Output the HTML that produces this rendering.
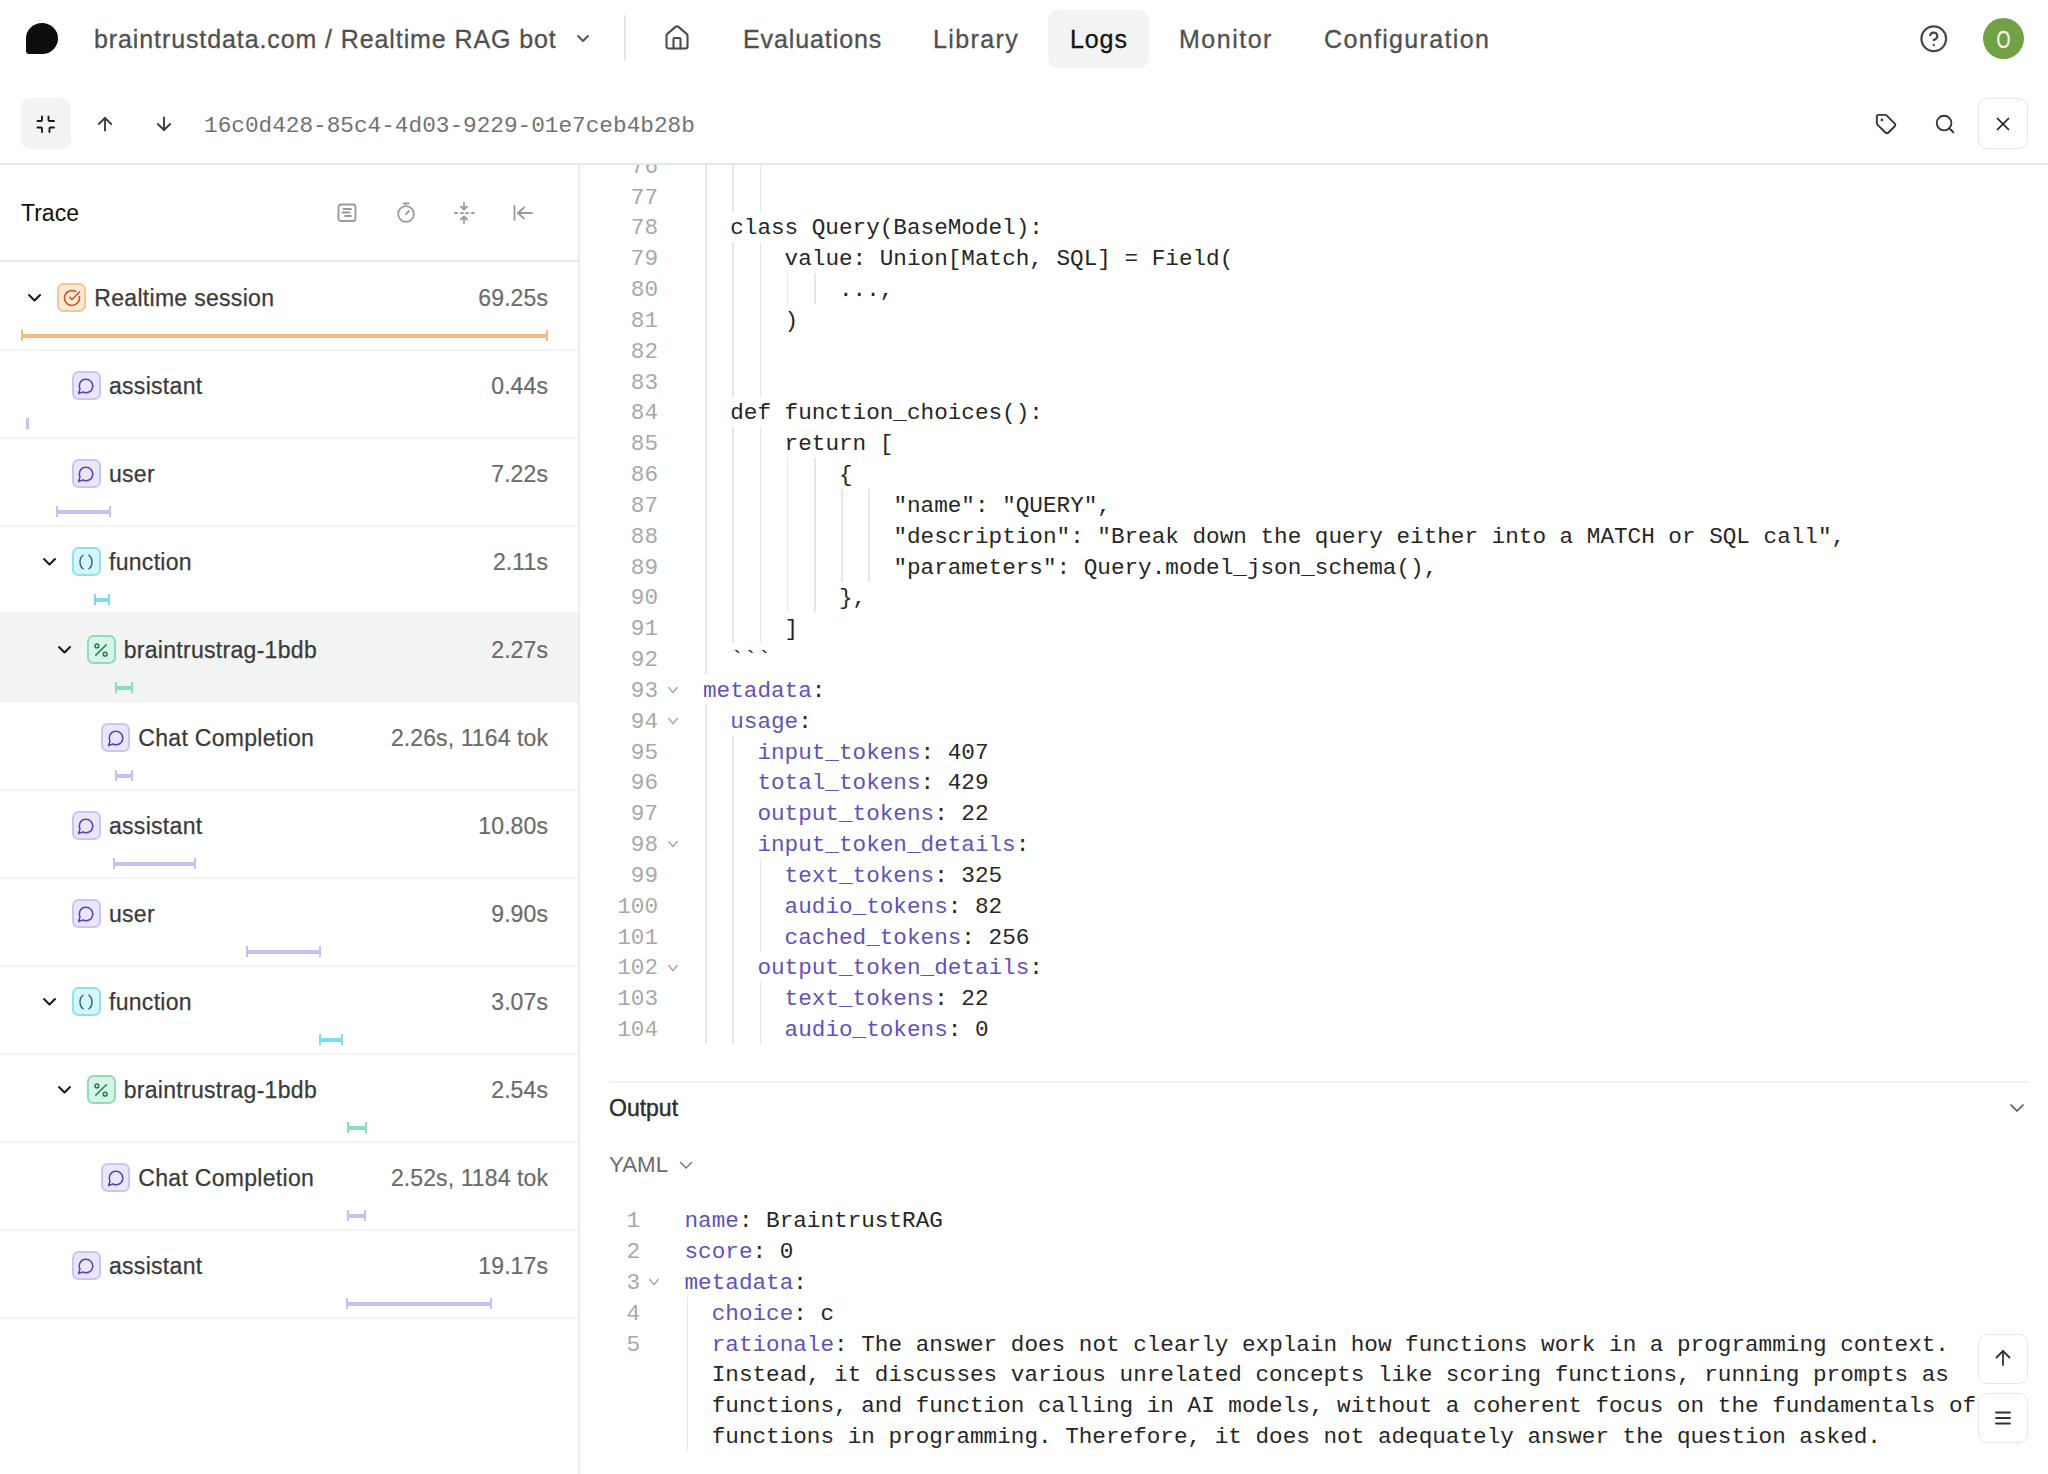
<!DOCTYPE html>
<html><head><meta charset="utf-8"><title>Realtime RAG bot</title>
<style>
html,body{margin:0;padding:0;background:#fff;}
body{width:2048px;height:1474px;overflow:hidden;position:relative;font-family:"Liberation Sans",sans-serif;}
.k{color:#6151bc}
</style></head><body>

<div style="position:absolute;left:26px;top:23px;width:32px;height:31px;background:#0d0d0d;border-radius:16px 16px 16px 3px / 15.5px 15.5px 15.5px 3px"></div>
<div style="position:absolute;left:94px;top:24.98px;font-family:'Liberation Sans', sans-serif;font-size:25px;color:#505050;letter-spacing:0.9px;white-space:pre;line-height:normal;-webkit-text-stroke:0.3px #505050">braintrustdata.com / Realtime RAG bot</div>
<svg style="position:absolute;left:572px;top:28px" width="22" height="22" viewBox="0 0 22 22" fill="none" stroke="#555" stroke-width="2" stroke-linecap="round" stroke-linejoin="round" ><path d="M6 8l5 5 5-5"/></svg>
<div style="position:absolute;left:624px;top:15px;width:2px;height:46px;background:#e8e8e8"></div>
<svg style="position:absolute;left:663px;top:24px" width="28" height="28" viewBox="0 0 24 24" fill="none" stroke="#4d4d4d" stroke-width="1.8" stroke-linecap="round" stroke-linejoin="round" ><path d="M15 21v-8a1 1 0 0 0-1-1h-4a1 1 0 0 0-1 1v8"/><path d="M3 10a2 2 0 0 1 .709-1.528l7-5.999a2 2 0 0 1 2.582 0l7 5.999A2 2 0 0 1 21 10v9a2 2 0 0 1-2 2H5a2 2 0 0 1-2-2z"/></svg>
<div style="position:absolute;left:1048px;top:10px;width:101px;height:58px;background:#f2f3f3;border-radius:10px"></div>
<div style="position:absolute;left:743px;top:24.98px;font-family:'Liberation Sans', sans-serif;font-size:25px;color:#505050;letter-spacing:0.9px;white-space:pre;line-height:normal;-webkit-text-stroke:0.3px #505050">Evaluations</div>
<div style="position:absolute;left:933px;top:24.98px;font-family:'Liberation Sans', sans-serif;font-size:25px;color:#505050;letter-spacing:1.4px;white-space:pre;line-height:normal;-webkit-text-stroke:0.3px #505050">Library</div>
<div style="position:absolute;left:1070px;top:24.98px;font-family:'Liberation Sans', sans-serif;font-size:25px;color:#141414;letter-spacing:0.9px;white-space:pre;line-height:normal;-webkit-text-stroke:0.3px #141414">Logs</div>
<div style="position:absolute;left:1179px;top:24.98px;font-family:'Liberation Sans', sans-serif;font-size:25px;color:#505050;letter-spacing:1.5px;white-space:pre;line-height:normal;-webkit-text-stroke:0.3px #505050">Monitor</div>
<div style="position:absolute;left:1324px;top:24.98px;font-family:'Liberation Sans', sans-serif;font-size:25px;color:#505050;letter-spacing:1.35px;white-space:pre;line-height:normal;-webkit-text-stroke:0.3px #505050">Configuration</div>
<svg style="position:absolute;left:1918.85px;top:23.95px" width="29.5" height="29.5" viewBox="0 0 24 24" fill="none" stroke="#474747" stroke-width="1.85" stroke-linecap="round" stroke-linejoin="round" ><circle cx="12" cy="12" r="10"/><path d="M9.09 9a3 3 0 0 1 5.83 1c0 2-3 3-3 3"/><path d="M12 17h.01"/></svg>
<div style="position:absolute;left:1982.5px;top:18px;width:41px;height:41px;border-radius:50%;background:#72a145"></div>
<div style="position:absolute;left:1982.5px;top:19.5px;width:41px;height:41px;line-height:41px;text-align:center;font-family:'Liberation Sans',sans-serif;font-size:23px;color:#f6fbef;-webkit-text-stroke:0.3px #f6fbef;transform:scaleX(0.78)">O</div>
<div style="position:absolute;left:21px;top:98px;width:50px;height:51px;background:#f2f3f3;border-radius:9px"></div>
<svg style="position:absolute;left:36px;top:114.7px" width="20" height="19" viewBox="0 0 20 19" fill="none" stroke="#1a1a1a" stroke-width="1.9" stroke-linecap="round" stroke-linejoin="round" ><path d="M6 1.5v3.5a1 1 0 0 1-1 1H1.5"/><path d="M12.5 1.5v3.5a1 1 0 0 0 1 1H18"/><path d="M1.5 12.5H5a1 1 0 0 1 1 1V17"/><path d="M18 12.5h-3.5a1 1 0 0 0-1 1V17"/></svg>
<svg style="position:absolute;left:96px;top:115px" width="18" height="18" viewBox="0 0 18 18" fill="none" stroke="#3d3d3d" stroke-width="1.9" stroke-linecap="round" stroke-linejoin="round" ><path d="M2.8 9L9 3l6.2 6"/><path d="M9 3v12.5"/></svg>
<svg style="position:absolute;left:154.5px;top:115px" width="18" height="18" viewBox="0 0 18 18" fill="none" stroke="#3d3d3d" stroke-width="1.9" stroke-linecap="round" stroke-linejoin="round" ><path d="M2.8 9L9 15l6.2-6"/><path d="M9 2.5v12.5"/></svg>
<div style="position:absolute;left:204px;top:113.09px;font-family:'Liberation Mono', monospace;font-size:22.72px;color:#727272;letter-spacing:0px;white-space:pre;line-height:normal;">16c0d428-85c4-4d03-9229-01e7ceb4b28b</div>
<svg style="position:absolute;left:1875px;top:113px" width="22" height="22" viewBox="0 0 24 24" fill="none" stroke="#333" stroke-width="2" stroke-linecap="round" stroke-linejoin="round" ><path d="M12.586 2.586A2 2 0 0 0 11.172 2H4a2 2 0 0 0-2 2v7.172a2 2 0 0 0 .586 1.414l8.704 8.704a2.426 2.426 0 0 0 3.42 0l6.58-6.58a2.426 2.426 0 0 0 0-3.42z"/><circle cx="7.5" cy="7.5" r=".5" fill="#333"/></svg>
<svg style="position:absolute;left:1934px;top:113px" width="22" height="22" viewBox="0 0 24 24" fill="none" stroke="#333" stroke-width="2" stroke-linecap="round" stroke-linejoin="round" ><circle cx="11" cy="11" r="8"/><path d="m21 21-4.3-4.3"/></svg>
<div style="position:absolute;left:1978px;top:98px;width:48px;height:49px;border:1.5px solid #e4e4e4;border-radius:9px"></div>
<svg style="position:absolute;left:1992px;top:113px" width="22" height="22" viewBox="0 0 24 24" fill="none" stroke="#222" stroke-width="1.9" stroke-linecap="round" stroke-linejoin="round" ><path d="M18 6 6 18"/><path d="m6 6 12 12"/></svg>
<div style="position:absolute;left:0;top:163px;width:2048px;height:2px;background:#e6e6e6"></div>
<div style="position:absolute;left:578px;top:164px;width:2px;height:1310px;background:#ececec"></div>
<div style="position:absolute;left:21px;top:200.09px;font-family:'Liberation Sans', sans-serif;font-size:23px;color:#111;letter-spacing:0px;white-space:pre;line-height:normal;">Trace</div>
<svg style="position:absolute;left:336px;top:202px" width="22" height="22" viewBox="0 0 22 22" fill="none" stroke="#9a9a9a" stroke-width="1.8" stroke-linecap="round" stroke-linejoin="round" ><rect x="2.5" y="2.5" width="17" height="16.5" rx="2.5"/><path d="M7.5 7h7.5"/><path d="M6.5 10.5h7"/><path d="M9 14h6"/></svg>
<svg style="position:absolute;left:395px;top:200px" width="22" height="26" viewBox="0 0 22 26" fill="none" stroke="#9a9a9a" stroke-width="1.8" stroke-linecap="round" stroke-linejoin="round" ><path d="M8.5 3.5h5"/><circle cx="11" cy="14" r="7.8"/><path d="M11 14l3-3"/></svg>
<svg style="position:absolute;left:452px;top:201px" width="24" height="24" viewBox="0 0 24 24" fill="none" stroke="#9a9a9a" stroke-width="1.8" stroke-linecap="round" stroke-linejoin="round" ><path d="M12 2v6"/><path d="M9 5.5l3 3 3-3"/><path d="M12 22v-6"/><path d="M9 18.5l3-3 3 3"/><path d="M3 12h2"/><path d="M9 12h2"/><path d="M14 12h2"/><path d="M20 12h2"/></svg>
<svg style="position:absolute;left:510px;top:201px" width="24" height="24" viewBox="0 0 24 24" fill="none" stroke="#9a9a9a" stroke-width="1.8" stroke-linecap="round" stroke-linejoin="round" ><path d="M4.5 5v14"/><path d="M14 6.5l-6 5.5 6 5.5"/><path d="M8 12h14"/></svg>
<div style="position:absolute;left:0;top:260px;width:578px;height:2px;background:#e8e8e8"></div>
<svg style="position:absolute;left:26.299999999999997px;top:289px" width="17" height="17" viewBox="0 0 17 17" fill="none" stroke="#1a1a1a" stroke-width="2.1" stroke-linecap="round" stroke-linejoin="round" ><path d="M3 6l5.5 5.5L14 6"/></svg>
<div style="position:absolute;left:57.30px;top:283px;width:25px;height:25px;background:#fde9d4;border:2px solid #f3c699;border-radius:6.5px"></div>
<svg style="position:absolute;left:62.8px;top:288.5px" width="18" height="18" viewBox="0 0 24 24" fill="none" stroke="#c2541c" stroke-width="2" stroke-linecap="round" stroke-linejoin="round" ><path d="M21.801 10A10 10 0 1 1 17 3.335"/><path d="m9 11 3 3L22 4"/></svg>
<div style="position:absolute;left:94.3px;top:285.49px;font-family:'Liberation Sans', sans-serif;font-size:23px;color:#3a3a3a;letter-spacing:0.3px;white-space:pre;line-height:normal;-webkit-text-stroke:0.25px #3a3a3a">Realtime session</div>
<div style="position:absolute;right:1500px;top:285.49px;font-family:'Liberation Sans', sans-serif;font-size:23px;color:#6b6b6b;letter-spacing:0.1px;white-space:pre;line-height:normal;-webkit-text-stroke:0.2px #6b6b6b">69.25s</div>
<div style="position:absolute;left:21.0px;top:334.0px;width:527.0px;height:4px;background:#f4bb7e"></div>
<div style="position:absolute;left:21.0px;top:330.0px;width:2px;height:11px;background:#f4bb7e"></div>
<div style="position:absolute;left:546.0px;top:330.0px;width:2px;height:11px;background:#f4bb7e"></div>
<div style="position:absolute;left:0;top:349px;width:578px;height:2px;background:#f4f4f4"></div>
<div style="position:absolute;left:71.97px;top:371px;width:25px;height:25px;background:#ebe7fb;border:2px solid #cdc3f5;border-radius:6.5px"></div>
<svg style="position:absolute;left:77.47px;top:376.5px" width="18" height="18" viewBox="0 0 24 24" fill="none" stroke="#5b3fc4" stroke-width="2" stroke-linecap="round" stroke-linejoin="round" ><path d="M7.9 20A9 9 0 1 0 4 16.1L2 22Z"/></svg>
<div style="position:absolute;left:108.97px;top:373.49px;font-family:'Liberation Sans', sans-serif;font-size:23px;color:#3a3a3a;letter-spacing:0.3px;white-space:pre;line-height:normal;-webkit-text-stroke:0.25px #3a3a3a">assistant</div>
<div style="position:absolute;right:1500px;top:373.49px;font-family:'Liberation Sans', sans-serif;font-size:23px;color:#6b6b6b;letter-spacing:0.1px;white-space:pre;line-height:normal;-webkit-text-stroke:0.2px #6b6b6b">0.44s</div>
<div style="position:absolute;left:26.4px;top:418.0px;width:2px;height:11px;background:#c9bff6"></div>
<div style="position:absolute;left:27.0px;top:418.0px;width:2px;height:11px;background:#c9bff6"></div>
<div style="position:absolute;left:0;top:437px;width:578px;height:2px;background:#f4f4f4"></div>
<div style="position:absolute;left:71.97px;top:459px;width:25px;height:25px;background:#ebe7fb;border:2px solid #cdc3f5;border-radius:6.5px"></div>
<svg style="position:absolute;left:77.47px;top:464.5px" width="18" height="18" viewBox="0 0 24 24" fill="none" stroke="#5b3fc4" stroke-width="2" stroke-linecap="round" stroke-linejoin="round" ><path d="M7.9 20A9 9 0 1 0 4 16.1L2 22Z"/></svg>
<div style="position:absolute;left:108.97px;top:461.49px;font-family:'Liberation Sans', sans-serif;font-size:23px;color:#3a3a3a;letter-spacing:0.3px;white-space:pre;line-height:normal;-webkit-text-stroke:0.25px #3a3a3a">user</div>
<div style="position:absolute;right:1500px;top:461.49px;font-family:'Liberation Sans', sans-serif;font-size:23px;color:#6b6b6b;letter-spacing:0.1px;white-space:pre;line-height:normal;-webkit-text-stroke:0.2px #6b6b6b">7.22s</div>
<div style="position:absolute;left:55.6px;top:510.0px;width:55.3px;height:4px;background:#c9bff6"></div>
<div style="position:absolute;left:55.6px;top:506.0px;width:2px;height:11px;background:#c9bff6"></div>
<div style="position:absolute;left:108.9px;top:506.0px;width:2px;height:11px;background:#c9bff6"></div>
<div style="position:absolute;left:0;top:525px;width:578px;height:2px;background:#f4f4f4"></div>
<svg style="position:absolute;left:40.97px;top:553px" width="17" height="17" viewBox="0 0 17 17" fill="none" stroke="#1a1a1a" stroke-width="2.1" stroke-linecap="round" stroke-linejoin="round" ><path d="M3 6l5.5 5.5L14 6"/></svg>
<div style="position:absolute;left:71.97px;top:547px;width:25px;height:25px;background:#d7f6fb;border:2px solid #8fe1f0;border-radius:6.5px"></div>
<svg style="position:absolute;left:77.47px;top:552.5px" width="18" height="18" viewBox="0 0 24 24" fill="none" stroke="#2a6a80" stroke-width="2" stroke-linecap="round" stroke-linejoin="round" ><path d="M8 21s-4-3-4-9 4-9 4-9"/><path d="M16 3s4 3 4 9-4 9-4 9"/></svg>
<div style="position:absolute;left:108.97px;top:549.48px;font-family:'Liberation Sans', sans-serif;font-size:23px;color:#3a3a3a;letter-spacing:0.3px;white-space:pre;line-height:normal;-webkit-text-stroke:0.25px #3a3a3a">function</div>
<div style="position:absolute;right:1500px;top:549.48px;font-family:'Liberation Sans', sans-serif;font-size:23px;color:#6b6b6b;letter-spacing:0.1px;white-space:pre;line-height:normal;-webkit-text-stroke:0.2px #6b6b6b">2.11s</div>
<div style="position:absolute;left:93.6px;top:598.0px;width:16.4px;height:4px;background:#7fdaee"></div>
<div style="position:absolute;left:93.6px;top:594.0px;width:2px;height:11px;background:#7fdaee"></div>
<div style="position:absolute;left:108.0px;top:594.0px;width:2px;height:11px;background:#7fdaee"></div>
<div style="position:absolute;left:0;top:613px;width:578px;height:2px;background:#f4f4f4"></div>
<div style="position:absolute;left:0;top:612px;width:578px;height:89px;background:#f2f3f3"></div>
<svg style="position:absolute;left:55.64px;top:641px" width="17" height="17" viewBox="0 0 17 17" fill="none" stroke="#1a1a1a" stroke-width="2.1" stroke-linecap="round" stroke-linejoin="round" ><path d="M3 6l5.5 5.5L14 6"/></svg>
<div style="position:absolute;left:86.64px;top:635px;width:25px;height:25px;background:#d7f5e6;border:2px solid #8fdcb7;border-radius:6.5px"></div>
<svg style="position:absolute;left:92.14px;top:640.5px" width="18" height="18" viewBox="0 0 24 24" fill="none" stroke="#267a55" stroke-width="2" stroke-linecap="round" stroke-linejoin="round" ><line x1="19" x2="5" y1="5" y2="19"/><circle cx="6.5" cy="6.5" r="2.5"/><circle cx="17.5" cy="17.5" r="2.5"/></svg>
<div style="position:absolute;left:123.64px;top:637.48px;font-family:'Liberation Sans', sans-serif;font-size:23px;color:#3a3a3a;letter-spacing:0.3px;white-space:pre;line-height:normal;-webkit-text-stroke:0.25px #3a3a3a">braintrustrag-1bdb</div>
<div style="position:absolute;right:1500px;top:637.48px;font-family:'Liberation Sans', sans-serif;font-size:23px;color:#6b6b6b;letter-spacing:0.1px;white-space:pre;line-height:normal;-webkit-text-stroke:0.2px #6b6b6b">2.27s</div>
<div style="position:absolute;left:114.7px;top:686.0px;width:17.8px;height:4px;background:#88e0b7"></div>
<div style="position:absolute;left:114.7px;top:682.0px;width:2px;height:11px;background:#88e0b7"></div>
<div style="position:absolute;left:130.5px;top:682.0px;width:2px;height:11px;background:#88e0b7"></div>
<div style="position:absolute;left:0;top:701px;width:578px;height:2px;background:#f4f4f4"></div>
<div style="position:absolute;left:101.31px;top:723px;width:25px;height:25px;background:#ebe7fb;border:2px solid #cdc3f5;border-radius:6.5px"></div>
<svg style="position:absolute;left:106.81px;top:728.5px" width="18" height="18" viewBox="0 0 24 24" fill="none" stroke="#5b3fc4" stroke-width="2" stroke-linecap="round" stroke-linejoin="round" ><path d="M7.9 20A9 9 0 1 0 4 16.1L2 22Z"/></svg>
<div style="position:absolute;left:138.31px;top:725.48px;font-family:'Liberation Sans', sans-serif;font-size:23px;color:#3a3a3a;letter-spacing:0.3px;white-space:pre;line-height:normal;-webkit-text-stroke:0.25px #3a3a3a">Chat Completion</div>
<div style="position:absolute;right:1500px;top:725.48px;font-family:'Liberation Sans', sans-serif;font-size:23px;color:#6b6b6b;letter-spacing:0.1px;white-space:pre;line-height:normal;-webkit-text-stroke:0.2px #6b6b6b">2.26s, 1164 tok</div>
<div style="position:absolute;left:114.7px;top:774.0px;width:17.8px;height:4px;background:#c9bff6"></div>
<div style="position:absolute;left:114.7px;top:770.0px;width:2px;height:11px;background:#c9bff6"></div>
<div style="position:absolute;left:130.5px;top:770.0px;width:2px;height:11px;background:#c9bff6"></div>
<div style="position:absolute;left:0;top:789px;width:578px;height:2px;background:#f4f4f4"></div>
<div style="position:absolute;left:71.97px;top:811px;width:25px;height:25px;background:#ebe7fb;border:2px solid #cdc3f5;border-radius:6.5px"></div>
<svg style="position:absolute;left:77.47px;top:816.5px" width="18" height="18" viewBox="0 0 24 24" fill="none" stroke="#5b3fc4" stroke-width="2" stroke-linecap="round" stroke-linejoin="round" ><path d="M7.9 20A9 9 0 1 0 4 16.1L2 22Z"/></svg>
<div style="position:absolute;left:108.97px;top:813.48px;font-family:'Liberation Sans', sans-serif;font-size:23px;color:#3a3a3a;letter-spacing:0.3px;white-space:pre;line-height:normal;-webkit-text-stroke:0.25px #3a3a3a">assistant</div>
<div style="position:absolute;right:1500px;top:813.48px;font-family:'Liberation Sans', sans-serif;font-size:23px;color:#6b6b6b;letter-spacing:0.1px;white-space:pre;line-height:normal;-webkit-text-stroke:0.2px #6b6b6b">10.80s</div>
<div style="position:absolute;left:113.4px;top:862.0px;width:82.4px;height:4px;background:#c9bff6"></div>
<div style="position:absolute;left:113.4px;top:858.0px;width:2px;height:11px;background:#c9bff6"></div>
<div style="position:absolute;left:193.8px;top:858.0px;width:2px;height:11px;background:#c9bff6"></div>
<div style="position:absolute;left:0;top:877px;width:578px;height:2px;background:#f4f4f4"></div>
<div style="position:absolute;left:71.97px;top:899px;width:25px;height:25px;background:#ebe7fb;border:2px solid #cdc3f5;border-radius:6.5px"></div>
<svg style="position:absolute;left:77.47px;top:904.5px" width="18" height="18" viewBox="0 0 24 24" fill="none" stroke="#5b3fc4" stroke-width="2" stroke-linecap="round" stroke-linejoin="round" ><path d="M7.9 20A9 9 0 1 0 4 16.1L2 22Z"/></svg>
<div style="position:absolute;left:108.97px;top:901.48px;font-family:'Liberation Sans', sans-serif;font-size:23px;color:#3a3a3a;letter-spacing:0.3px;white-space:pre;line-height:normal;-webkit-text-stroke:0.25px #3a3a3a">user</div>
<div style="position:absolute;right:1500px;top:901.48px;font-family:'Liberation Sans', sans-serif;font-size:23px;color:#6b6b6b;letter-spacing:0.1px;white-space:pre;line-height:normal;-webkit-text-stroke:0.2px #6b6b6b">9.90s</div>
<div style="position:absolute;left:245.6px;top:950.0px;width:75.5px;height:4px;background:#c9bff6"></div>
<div style="position:absolute;left:245.6px;top:946.0px;width:2px;height:11px;background:#c9bff6"></div>
<div style="position:absolute;left:319.1px;top:946.0px;width:2px;height:11px;background:#c9bff6"></div>
<div style="position:absolute;left:0;top:965px;width:578px;height:2px;background:#f4f4f4"></div>
<svg style="position:absolute;left:40.97px;top:993px" width="17" height="17" viewBox="0 0 17 17" fill="none" stroke="#1a1a1a" stroke-width="2.1" stroke-linecap="round" stroke-linejoin="round" ><path d="M3 6l5.5 5.5L14 6"/></svg>
<div style="position:absolute;left:71.97px;top:987px;width:25px;height:25px;background:#d7f6fb;border:2px solid #8fe1f0;border-radius:6.5px"></div>
<svg style="position:absolute;left:77.47px;top:992.5px" width="18" height="18" viewBox="0 0 24 24" fill="none" stroke="#2a6a80" stroke-width="2" stroke-linecap="round" stroke-linejoin="round" ><path d="M8 21s-4-3-4-9 4-9 4-9"/><path d="M16 3s4 3 4 9-4 9-4 9"/></svg>
<div style="position:absolute;left:108.97px;top:989.48px;font-family:'Liberation Sans', sans-serif;font-size:23px;color:#3a3a3a;letter-spacing:0.3px;white-space:pre;line-height:normal;-webkit-text-stroke:0.25px #3a3a3a">function</div>
<div style="position:absolute;right:1500px;top:989.48px;font-family:'Liberation Sans', sans-serif;font-size:23px;color:#6b6b6b;letter-spacing:0.1px;white-space:pre;line-height:normal;-webkit-text-stroke:0.2px #6b6b6b">3.07s</div>
<div style="position:absolute;left:318.8px;top:1038.0px;width:23.8px;height:4px;background:#7fdaee"></div>
<div style="position:absolute;left:318.8px;top:1034.0px;width:2px;height:11px;background:#7fdaee"></div>
<div style="position:absolute;left:340.6px;top:1034.0px;width:2px;height:11px;background:#7fdaee"></div>
<div style="position:absolute;left:0;top:1053px;width:578px;height:2px;background:#f4f4f4"></div>
<svg style="position:absolute;left:55.64px;top:1081px" width="17" height="17" viewBox="0 0 17 17" fill="none" stroke="#1a1a1a" stroke-width="2.1" stroke-linecap="round" stroke-linejoin="round" ><path d="M3 6l5.5 5.5L14 6"/></svg>
<div style="position:absolute;left:86.64px;top:1075px;width:25px;height:25px;background:#d7f5e6;border:2px solid #8fdcb7;border-radius:6.5px"></div>
<svg style="position:absolute;left:92.14px;top:1080.5px" width="18" height="18" viewBox="0 0 24 24" fill="none" stroke="#267a55" stroke-width="2" stroke-linecap="round" stroke-linejoin="round" ><line x1="19" x2="5" y1="5" y2="19"/><circle cx="6.5" cy="6.5" r="2.5"/><circle cx="17.5" cy="17.5" r="2.5"/></svg>
<div style="position:absolute;left:123.64px;top:1077.48px;font-family:'Liberation Sans', sans-serif;font-size:23px;color:#3a3a3a;letter-spacing:0.3px;white-space:pre;line-height:normal;-webkit-text-stroke:0.25px #3a3a3a">braintrustrag-1bdb</div>
<div style="position:absolute;right:1500px;top:1077.48px;font-family:'Liberation Sans', sans-serif;font-size:23px;color:#6b6b6b;letter-spacing:0.1px;white-space:pre;line-height:normal;-webkit-text-stroke:0.2px #6b6b6b">2.54s</div>
<div style="position:absolute;left:346.7px;top:1126.0px;width:20.2px;height:4px;background:#88e0b7"></div>
<div style="position:absolute;left:346.7px;top:1122.0px;width:2px;height:11px;background:#88e0b7"></div>
<div style="position:absolute;left:364.9px;top:1122.0px;width:2px;height:11px;background:#88e0b7"></div>
<div style="position:absolute;left:0;top:1141px;width:578px;height:2px;background:#f4f4f4"></div>
<div style="position:absolute;left:101.31px;top:1163px;width:25px;height:25px;background:#ebe7fb;border:2px solid #cdc3f5;border-radius:6.5px"></div>
<svg style="position:absolute;left:106.81px;top:1168.5px" width="18" height="18" viewBox="0 0 24 24" fill="none" stroke="#5b3fc4" stroke-width="2" stroke-linecap="round" stroke-linejoin="round" ><path d="M7.9 20A9 9 0 1 0 4 16.1L2 22Z"/></svg>
<div style="position:absolute;left:138.31px;top:1165.48px;font-family:'Liberation Sans', sans-serif;font-size:23px;color:#3a3a3a;letter-spacing:0.3px;white-space:pre;line-height:normal;-webkit-text-stroke:0.25px #3a3a3a">Chat Completion</div>
<div style="position:absolute;right:1500px;top:1165.48px;font-family:'Liberation Sans', sans-serif;font-size:23px;color:#6b6b6b;letter-spacing:0.1px;white-space:pre;line-height:normal;-webkit-text-stroke:0.2px #6b6b6b">2.52s, 1184 tok</div>
<div style="position:absolute;left:346.7px;top:1214.0px;width:19.3px;height:4px;background:#c9bff6"></div>
<div style="position:absolute;left:346.7px;top:1210.0px;width:2px;height:11px;background:#c9bff6"></div>
<div style="position:absolute;left:364.0px;top:1210.0px;width:2px;height:11px;background:#c9bff6"></div>
<div style="position:absolute;left:0;top:1229px;width:578px;height:2px;background:#f4f4f4"></div>
<div style="position:absolute;left:71.97px;top:1251px;width:25px;height:25px;background:#ebe7fb;border:2px solid #cdc3f5;border-radius:6.5px"></div>
<svg style="position:absolute;left:77.47px;top:1256.5px" width="18" height="18" viewBox="0 0 24 24" fill="none" stroke="#5b3fc4" stroke-width="2" stroke-linecap="round" stroke-linejoin="round" ><path d="M7.9 20A9 9 0 1 0 4 16.1L2 22Z"/></svg>
<div style="position:absolute;left:108.97px;top:1253.48px;font-family:'Liberation Sans', sans-serif;font-size:23px;color:#3a3a3a;letter-spacing:0.3px;white-space:pre;line-height:normal;-webkit-text-stroke:0.25px #3a3a3a">assistant</div>
<div style="position:absolute;right:1500px;top:1253.48px;font-family:'Liberation Sans', sans-serif;font-size:23px;color:#6b6b6b;letter-spacing:0.1px;white-space:pre;line-height:normal;-webkit-text-stroke:0.2px #6b6b6b">19.17s</div>
<div style="position:absolute;left:346.3px;top:1302.0px;width:145.5px;height:4px;background:#c9bff6"></div>
<div style="position:absolute;left:346.3px;top:1298.0px;width:2px;height:11px;background:#c9bff6"></div>
<div style="position:absolute;left:489.8px;top:1298.0px;width:2px;height:11px;background:#c9bff6"></div>
<div style="position:absolute;left:0;top:1317px;width:578px;height:2px;background:#f4f4f4"></div>
<div style="position:absolute;left:580px;top:165px;width:1468px;height:880px;overflow:hidden">
<div style="position:absolute;left:125.2px;top:-15.2px;width:1.6px;height:31.1px;background:#e6e6e6"></div>
<div style="position:absolute;left:152.4px;top:-15.2px;width:1.6px;height:31.1px;background:#e6e6e6"></div>
<div style="position:absolute;left:179.6px;top:-15.2px;width:1.6px;height:31.1px;background:#e6e6e6"></div>
<div style="position:absolute;left:50.8px;top:-11.18px;font-family:'Liberation Mono', monospace;font-size:22.67px;color:#a8a8a8;letter-spacing:0px;white-space:pre;line-height:normal;">76</div>
<div style="position:absolute;left:125.2px;top:15.6px;width:1.6px;height:31.1px;background:#e6e6e6"></div>
<div style="position:absolute;left:152.4px;top:15.6px;width:1.6px;height:31.1px;background:#e6e6e6"></div>
<div style="position:absolute;left:179.6px;top:15.6px;width:1.6px;height:31.1px;background:#e6e6e6"></div>
<div style="position:absolute;left:50.8px;top:19.65px;font-family:'Liberation Mono', monospace;font-size:22.67px;color:#a8a8a8;letter-spacing:0px;white-space:pre;line-height:normal;">77</div>
<div style="position:absolute;left:125.2px;top:46.4px;width:1.6px;height:31.1px;background:#e6e6e6"></div>
<div style="position:absolute;left:50.8px;top:50.48px;font-family:'Liberation Mono', monospace;font-size:22.67px;color:#a8a8a8;letter-spacing:0px;white-space:pre;line-height:normal;">78</div>
<div style="position:absolute;left:150.2px;top:50.48px;font-family:'Liberation Mono', monospace;font-size:22.67px;color:#262626;white-space:pre;line-height:normal">class Query(BaseModel):</div>
<div style="position:absolute;left:125.2px;top:77.3px;width:1.6px;height:31.1px;background:#e6e6e6"></div>
<div style="position:absolute;left:152.4px;top:77.3px;width:1.6px;height:31.1px;background:#e6e6e6"></div>
<div style="position:absolute;left:179.6px;top:77.3px;width:1.6px;height:31.1px;background:#e6e6e6"></div>
<div style="position:absolute;left:50.8px;top:81.31px;font-family:'Liberation Mono', monospace;font-size:22.67px;color:#a8a8a8;letter-spacing:0px;white-space:pre;line-height:normal;">79</div>
<div style="position:absolute;left:204.6px;top:81.31px;font-family:'Liberation Mono', monospace;font-size:22.67px;color:#262626;white-space:pre;line-height:normal">value: Union[Match, SQL] = Field(</div>
<div style="position:absolute;left:125.2px;top:108.1px;width:1.6px;height:31.1px;background:#e6e6e6"></div>
<div style="position:absolute;left:152.4px;top:108.1px;width:1.6px;height:31.1px;background:#e6e6e6"></div>
<div style="position:absolute;left:179.6px;top:108.1px;width:1.6px;height:31.1px;background:#e6e6e6"></div>
<div style="position:absolute;left:206.8px;top:108.1px;width:1.6px;height:31.1px;background:#e6e6e6"></div>
<div style="position:absolute;left:234.0px;top:108.1px;width:1.6px;height:31.1px;background:#e6e6e6"></div>
<div style="position:absolute;left:50.8px;top:112.14px;font-family:'Liberation Mono', monospace;font-size:22.67px;color:#a8a8a8;letter-spacing:0px;white-space:pre;line-height:normal;">80</div>
<div style="position:absolute;left:259.0px;top:112.14px;font-family:'Liberation Mono', monospace;font-size:22.67px;color:#262626;white-space:pre;line-height:normal">...,</div>
<div style="position:absolute;left:125.2px;top:138.9px;width:1.6px;height:31.1px;background:#e6e6e6"></div>
<div style="position:absolute;left:152.4px;top:138.9px;width:1.6px;height:31.1px;background:#e6e6e6"></div>
<div style="position:absolute;left:179.6px;top:138.9px;width:1.6px;height:31.1px;background:#e6e6e6"></div>
<div style="position:absolute;left:50.8px;top:142.97px;font-family:'Liberation Mono', monospace;font-size:22.67px;color:#a8a8a8;letter-spacing:0px;white-space:pre;line-height:normal;">81</div>
<div style="position:absolute;left:204.6px;top:142.97px;font-family:'Liberation Mono', monospace;font-size:22.67px;color:#262626;white-space:pre;line-height:normal">)</div>
<div style="position:absolute;left:125.2px;top:169.8px;width:1.6px;height:31.1px;background:#e6e6e6"></div>
<div style="position:absolute;left:152.4px;top:169.8px;width:1.6px;height:31.1px;background:#e6e6e6"></div>
<div style="position:absolute;left:179.6px;top:169.8px;width:1.6px;height:31.1px;background:#e6e6e6"></div>
<div style="position:absolute;left:50.8px;top:173.80px;font-family:'Liberation Mono', monospace;font-size:22.67px;color:#a8a8a8;letter-spacing:0px;white-space:pre;line-height:normal;">82</div>
<div style="position:absolute;left:125.2px;top:200.6px;width:1.6px;height:31.1px;background:#e6e6e6"></div>
<div style="position:absolute;left:152.4px;top:200.6px;width:1.6px;height:31.1px;background:#e6e6e6"></div>
<div style="position:absolute;left:179.6px;top:200.6px;width:1.6px;height:31.1px;background:#e6e6e6"></div>
<div style="position:absolute;left:50.8px;top:204.63px;font-family:'Liberation Mono', monospace;font-size:22.67px;color:#a8a8a8;letter-spacing:0px;white-space:pre;line-height:normal;">83</div>
<div style="position:absolute;left:125.2px;top:231.4px;width:1.6px;height:31.1px;background:#e6e6e6"></div>
<div style="position:absolute;left:50.8px;top:235.46px;font-family:'Liberation Mono', monospace;font-size:22.67px;color:#a8a8a8;letter-spacing:0px;white-space:pre;line-height:normal;">84</div>
<div style="position:absolute;left:150.2px;top:235.46px;font-family:'Liberation Mono', monospace;font-size:22.67px;color:#262626;white-space:pre;line-height:normal">def function_choices():</div>
<div style="position:absolute;left:125.2px;top:262.2px;width:1.6px;height:31.1px;background:#e6e6e6"></div>
<div style="position:absolute;left:152.4px;top:262.2px;width:1.6px;height:31.1px;background:#e6e6e6"></div>
<div style="position:absolute;left:179.6px;top:262.2px;width:1.6px;height:31.1px;background:#e6e6e6"></div>
<div style="position:absolute;left:50.8px;top:266.29px;font-family:'Liberation Mono', monospace;font-size:22.67px;color:#a8a8a8;letter-spacing:0px;white-space:pre;line-height:normal;">85</div>
<div style="position:absolute;left:204.6px;top:266.29px;font-family:'Liberation Mono', monospace;font-size:22.67px;color:#262626;white-space:pre;line-height:normal">return [</div>
<div style="position:absolute;left:125.2px;top:293.1px;width:1.6px;height:31.1px;background:#e6e6e6"></div>
<div style="position:absolute;left:152.4px;top:293.1px;width:1.6px;height:31.1px;background:#e6e6e6"></div>
<div style="position:absolute;left:179.6px;top:293.1px;width:1.6px;height:31.1px;background:#e6e6e6"></div>
<div style="position:absolute;left:206.8px;top:293.1px;width:1.6px;height:31.1px;background:#e6e6e6"></div>
<div style="position:absolute;left:234.0px;top:293.1px;width:1.6px;height:31.1px;background:#e6e6e6"></div>
<div style="position:absolute;left:50.8px;top:297.12px;font-family:'Liberation Mono', monospace;font-size:22.67px;color:#a8a8a8;letter-spacing:0px;white-space:pre;line-height:normal;">86</div>
<div style="position:absolute;left:259.0px;top:297.12px;font-family:'Liberation Mono', monospace;font-size:22.67px;color:#262626;white-space:pre;line-height:normal">{</div>
<div style="position:absolute;left:125.2px;top:323.9px;width:1.6px;height:31.1px;background:#e6e6e6"></div>
<div style="position:absolute;left:152.4px;top:323.9px;width:1.6px;height:31.1px;background:#e6e6e6"></div>
<div style="position:absolute;left:179.6px;top:323.9px;width:1.6px;height:31.1px;background:#e6e6e6"></div>
<div style="position:absolute;left:206.8px;top:323.9px;width:1.6px;height:31.1px;background:#e6e6e6"></div>
<div style="position:absolute;left:234.0px;top:323.9px;width:1.6px;height:31.1px;background:#e6e6e6"></div>
<div style="position:absolute;left:261.2px;top:323.9px;width:1.6px;height:31.1px;background:#e6e6e6"></div>
<div style="position:absolute;left:288.4px;top:323.9px;width:1.6px;height:31.1px;background:#e6e6e6"></div>
<div style="position:absolute;left:50.8px;top:327.95px;font-family:'Liberation Mono', monospace;font-size:22.67px;color:#a8a8a8;letter-spacing:0px;white-space:pre;line-height:normal;">87</div>
<div style="position:absolute;left:313.4px;top:327.95px;font-family:'Liberation Mono', monospace;font-size:22.67px;color:#262626;white-space:pre;line-height:normal">&quot;name&quot;: &quot;QUERY&quot;,</div>
<div style="position:absolute;left:125.2px;top:354.7px;width:1.6px;height:31.1px;background:#e6e6e6"></div>
<div style="position:absolute;left:152.4px;top:354.7px;width:1.6px;height:31.1px;background:#e6e6e6"></div>
<div style="position:absolute;left:179.6px;top:354.7px;width:1.6px;height:31.1px;background:#e6e6e6"></div>
<div style="position:absolute;left:206.8px;top:354.7px;width:1.6px;height:31.1px;background:#e6e6e6"></div>
<div style="position:absolute;left:234.0px;top:354.7px;width:1.6px;height:31.1px;background:#e6e6e6"></div>
<div style="position:absolute;left:261.2px;top:354.7px;width:1.6px;height:31.1px;background:#e6e6e6"></div>
<div style="position:absolute;left:288.4px;top:354.7px;width:1.6px;height:31.1px;background:#e6e6e6"></div>
<div style="position:absolute;left:50.8px;top:358.78px;font-family:'Liberation Mono', monospace;font-size:22.67px;color:#a8a8a8;letter-spacing:0px;white-space:pre;line-height:normal;">88</div>
<div style="position:absolute;left:313.4px;top:358.78px;font-family:'Liberation Mono', monospace;font-size:22.67px;color:#262626;white-space:pre;line-height:normal">&quot;description&quot;: &quot;Break down the query either into a MATCH or SQL call&quot;,</div>
<div style="position:absolute;left:125.2px;top:385.6px;width:1.6px;height:31.1px;background:#e6e6e6"></div>
<div style="position:absolute;left:152.4px;top:385.6px;width:1.6px;height:31.1px;background:#e6e6e6"></div>
<div style="position:absolute;left:179.6px;top:385.6px;width:1.6px;height:31.1px;background:#e6e6e6"></div>
<div style="position:absolute;left:206.8px;top:385.6px;width:1.6px;height:31.1px;background:#e6e6e6"></div>
<div style="position:absolute;left:234.0px;top:385.6px;width:1.6px;height:31.1px;background:#e6e6e6"></div>
<div style="position:absolute;left:261.2px;top:385.6px;width:1.6px;height:31.1px;background:#e6e6e6"></div>
<div style="position:absolute;left:288.4px;top:385.6px;width:1.6px;height:31.1px;background:#e6e6e6"></div>
<div style="position:absolute;left:50.8px;top:389.61px;font-family:'Liberation Mono', monospace;font-size:22.67px;color:#a8a8a8;letter-spacing:0px;white-space:pre;line-height:normal;">89</div>
<div style="position:absolute;left:313.4px;top:389.61px;font-family:'Liberation Mono', monospace;font-size:22.67px;color:#262626;white-space:pre;line-height:normal">&quot;parameters&quot;: Query.model_json_schema(),</div>
<div style="position:absolute;left:125.2px;top:416.4px;width:1.6px;height:31.1px;background:#e6e6e6"></div>
<div style="position:absolute;left:152.4px;top:416.4px;width:1.6px;height:31.1px;background:#e6e6e6"></div>
<div style="position:absolute;left:179.6px;top:416.4px;width:1.6px;height:31.1px;background:#e6e6e6"></div>
<div style="position:absolute;left:206.8px;top:416.4px;width:1.6px;height:31.1px;background:#e6e6e6"></div>
<div style="position:absolute;left:234.0px;top:416.4px;width:1.6px;height:31.1px;background:#e6e6e6"></div>
<div style="position:absolute;left:50.8px;top:420.44px;font-family:'Liberation Mono', monospace;font-size:22.67px;color:#a8a8a8;letter-spacing:0px;white-space:pre;line-height:normal;">90</div>
<div style="position:absolute;left:259.0px;top:420.44px;font-family:'Liberation Mono', monospace;font-size:22.67px;color:#262626;white-space:pre;line-height:normal">},</div>
<div style="position:absolute;left:125.2px;top:447.2px;width:1.6px;height:31.1px;background:#e6e6e6"></div>
<div style="position:absolute;left:152.4px;top:447.2px;width:1.6px;height:31.1px;background:#e6e6e6"></div>
<div style="position:absolute;left:179.6px;top:447.2px;width:1.6px;height:31.1px;background:#e6e6e6"></div>
<div style="position:absolute;left:50.8px;top:451.27px;font-family:'Liberation Mono', monospace;font-size:22.67px;color:#a8a8a8;letter-spacing:0px;white-space:pre;line-height:normal;">91</div>
<div style="position:absolute;left:204.6px;top:451.27px;font-family:'Liberation Mono', monospace;font-size:22.67px;color:#262626;white-space:pre;line-height:normal">]</div>
<div style="position:absolute;left:125.2px;top:478.1px;width:1.6px;height:31.1px;background:#e6e6e6"></div>
<div style="position:absolute;left:50.8px;top:482.10px;font-family:'Liberation Mono', monospace;font-size:22.67px;color:#a8a8a8;letter-spacing:0px;white-space:pre;line-height:normal;">92</div>
<div style="position:absolute;left:150.2px;top:482.10px;font-family:'Liberation Mono', monospace;font-size:22.67px;color:#262626;white-space:pre;line-height:normal">```</div>
<div style="position:absolute;left:50.8px;top:512.93px;font-family:'Liberation Mono', monospace;font-size:22.67px;color:#a8a8a8;letter-spacing:0px;white-space:pre;line-height:normal;">93</div>
<svg style="position:absolute;left:87px;top:521.3px" width="12" height="9" viewBox="0 0 12 9" fill="none" stroke="#a0a0a0" stroke-width="1.3" stroke-linecap="round" stroke-linejoin="round" ><path d="M1.8 1.5l4.2 5.2 4.2-5.2"/></svg>
<div style="position:absolute;left:123.0px;top:512.93px;font-family:'Liberation Mono', monospace;font-size:22.67px;color:#262626;white-space:pre;line-height:normal"><span class="k">metadata</span>:</div>
<div style="position:absolute;left:125.2px;top:539.7px;width:1.6px;height:31.1px;background:#e6e6e6"></div>
<div style="position:absolute;left:50.8px;top:543.76px;font-family:'Liberation Mono', monospace;font-size:22.67px;color:#a8a8a8;letter-spacing:0px;white-space:pre;line-height:normal;">94</div>
<svg style="position:absolute;left:87px;top:552.13px" width="12" height="9" viewBox="0 0 12 9" fill="none" stroke="#a0a0a0" stroke-width="1.3" stroke-linecap="round" stroke-linejoin="round" ><path d="M1.8 1.5l4.2 5.2 4.2-5.2"/></svg>
<div style="position:absolute;left:150.2px;top:543.76px;font-family:'Liberation Mono', monospace;font-size:22.67px;color:#262626;white-space:pre;line-height:normal"><span class="k">usage</span>:</div>
<div style="position:absolute;left:125.2px;top:570.5px;width:1.6px;height:31.1px;background:#e6e6e6"></div>
<div style="position:absolute;left:152.4px;top:570.5px;width:1.6px;height:31.1px;background:#e6e6e6"></div>
<div style="position:absolute;left:50.8px;top:574.59px;font-family:'Liberation Mono', monospace;font-size:22.67px;color:#a8a8a8;letter-spacing:0px;white-space:pre;line-height:normal;">95</div>
<div style="position:absolute;left:177.4px;top:574.59px;font-family:'Liberation Mono', monospace;font-size:22.67px;color:#262626;white-space:pre;line-height:normal"><span class="k">input_tokens</span>: 407</div>
<div style="position:absolute;left:125.2px;top:601.4px;width:1.6px;height:31.1px;background:#e6e6e6"></div>
<div style="position:absolute;left:152.4px;top:601.4px;width:1.6px;height:31.1px;background:#e6e6e6"></div>
<div style="position:absolute;left:50.8px;top:605.42px;font-family:'Liberation Mono', monospace;font-size:22.67px;color:#a8a8a8;letter-spacing:0px;white-space:pre;line-height:normal;">96</div>
<div style="position:absolute;left:177.4px;top:605.42px;font-family:'Liberation Mono', monospace;font-size:22.67px;color:#262626;white-space:pre;line-height:normal"><span class="k">total_tokens</span>: 429</div>
<div style="position:absolute;left:125.2px;top:632.2px;width:1.6px;height:31.1px;background:#e6e6e6"></div>
<div style="position:absolute;left:152.4px;top:632.2px;width:1.6px;height:31.1px;background:#e6e6e6"></div>
<div style="position:absolute;left:50.8px;top:636.25px;font-family:'Liberation Mono', monospace;font-size:22.67px;color:#a8a8a8;letter-spacing:0px;white-space:pre;line-height:normal;">97</div>
<div style="position:absolute;left:177.4px;top:636.25px;font-family:'Liberation Mono', monospace;font-size:22.67px;color:#262626;white-space:pre;line-height:normal"><span class="k">output_tokens</span>: 22</div>
<div style="position:absolute;left:125.2px;top:663.0px;width:1.6px;height:31.1px;background:#e6e6e6"></div>
<div style="position:absolute;left:152.4px;top:663.0px;width:1.6px;height:31.1px;background:#e6e6e6"></div>
<div style="position:absolute;left:50.8px;top:667.08px;font-family:'Liberation Mono', monospace;font-size:22.67px;color:#a8a8a8;letter-spacing:0px;white-space:pre;line-height:normal;">98</div>
<svg style="position:absolute;left:87px;top:675.4499999999999px" width="12" height="9" viewBox="0 0 12 9" fill="none" stroke="#a0a0a0" stroke-width="1.3" stroke-linecap="round" stroke-linejoin="round" ><path d="M1.8 1.5l4.2 5.2 4.2-5.2"/></svg>
<div style="position:absolute;left:177.4px;top:667.08px;font-family:'Liberation Mono', monospace;font-size:22.67px;color:#262626;white-space:pre;line-height:normal"><span class="k">input_token_details</span>:</div>
<div style="position:absolute;left:125.2px;top:693.9px;width:1.6px;height:31.1px;background:#e6e6e6"></div>
<div style="position:absolute;left:152.4px;top:693.9px;width:1.6px;height:31.1px;background:#e6e6e6"></div>
<div style="position:absolute;left:179.6px;top:693.9px;width:1.6px;height:31.1px;background:#e6e6e6"></div>
<div style="position:absolute;left:50.8px;top:697.91px;font-family:'Liberation Mono', monospace;font-size:22.67px;color:#a8a8a8;letter-spacing:0px;white-space:pre;line-height:normal;">99</div>
<div style="position:absolute;left:204.6px;top:697.91px;font-family:'Liberation Mono', monospace;font-size:22.67px;color:#262626;white-space:pre;line-height:normal"><span class="k">text_tokens</span>: 325</div>
<div style="position:absolute;left:125.2px;top:724.7px;width:1.6px;height:31.1px;background:#e6e6e6"></div>
<div style="position:absolute;left:152.4px;top:724.7px;width:1.6px;height:31.1px;background:#e6e6e6"></div>
<div style="position:absolute;left:179.6px;top:724.7px;width:1.6px;height:31.1px;background:#e6e6e6"></div>
<div style="position:absolute;left:37.2px;top:728.74px;font-family:'Liberation Mono', monospace;font-size:22.67px;color:#a8a8a8;letter-spacing:0px;white-space:pre;line-height:normal;">100</div>
<div style="position:absolute;left:204.6px;top:728.74px;font-family:'Liberation Mono', monospace;font-size:22.67px;color:#262626;white-space:pre;line-height:normal"><span class="k">audio_tokens</span>: 82</div>
<div style="position:absolute;left:125.2px;top:755.5px;width:1.6px;height:31.1px;background:#e6e6e6"></div>
<div style="position:absolute;left:152.4px;top:755.5px;width:1.6px;height:31.1px;background:#e6e6e6"></div>
<div style="position:absolute;left:179.6px;top:755.5px;width:1.6px;height:31.1px;background:#e6e6e6"></div>
<div style="position:absolute;left:37.2px;top:759.57px;font-family:'Liberation Mono', monospace;font-size:22.67px;color:#a8a8a8;letter-spacing:0px;white-space:pre;line-height:normal;">101</div>
<div style="position:absolute;left:204.6px;top:759.57px;font-family:'Liberation Mono', monospace;font-size:22.67px;color:#262626;white-space:pre;line-height:normal"><span class="k">cached_tokens</span>: 256</div>
<div style="position:absolute;left:125.2px;top:786.4px;width:1.6px;height:31.1px;background:#e6e6e6"></div>
<div style="position:absolute;left:152.4px;top:786.4px;width:1.6px;height:31.1px;background:#e6e6e6"></div>
<div style="position:absolute;left:37.2px;top:790.40px;font-family:'Liberation Mono', monospace;font-size:22.67px;color:#a8a8a8;letter-spacing:0px;white-space:pre;line-height:normal;">102</div>
<svg style="position:absolute;left:87px;top:798.77px" width="12" height="9" viewBox="0 0 12 9" fill="none" stroke="#a0a0a0" stroke-width="1.3" stroke-linecap="round" stroke-linejoin="round" ><path d="M1.8 1.5l4.2 5.2 4.2-5.2"/></svg>
<div style="position:absolute;left:177.4px;top:790.40px;font-family:'Liberation Mono', monospace;font-size:22.67px;color:#262626;white-space:pre;line-height:normal"><span class="k">output_token_details</span>:</div>
<div style="position:absolute;left:125.2px;top:817.2px;width:1.6px;height:31.1px;background:#e6e6e6"></div>
<div style="position:absolute;left:152.4px;top:817.2px;width:1.6px;height:31.1px;background:#e6e6e6"></div>
<div style="position:absolute;left:179.6px;top:817.2px;width:1.6px;height:31.1px;background:#e6e6e6"></div>
<div style="position:absolute;left:37.2px;top:821.23px;font-family:'Liberation Mono', monospace;font-size:22.67px;color:#a8a8a8;letter-spacing:0px;white-space:pre;line-height:normal;">103</div>
<div style="position:absolute;left:204.6px;top:821.23px;font-family:'Liberation Mono', monospace;font-size:22.67px;color:#262626;white-space:pre;line-height:normal"><span class="k">text_tokens</span>: 22</div>
<div style="position:absolute;left:125.2px;top:848.0px;width:1.6px;height:31.1px;background:#e6e6e6"></div>
<div style="position:absolute;left:152.4px;top:848.0px;width:1.6px;height:31.1px;background:#e6e6e6"></div>
<div style="position:absolute;left:179.6px;top:848.0px;width:1.6px;height:31.1px;background:#e6e6e6"></div>
<div style="position:absolute;left:37.2px;top:852.06px;font-family:'Liberation Mono', monospace;font-size:22.67px;color:#a8a8a8;letter-spacing:0px;white-space:pre;line-height:normal;">104</div>
<div style="position:absolute;left:204.6px;top:852.06px;font-family:'Liberation Mono', monospace;font-size:22.67px;color:#262626;white-space:pre;line-height:normal"><span class="k">audio_tokens</span>: 0</div>
</div>
<div style="position:absolute;left:609px;top:1081px;width:1420px;height:2px;background:#efefef"></div>
<div style="position:absolute;left:609px;top:1095.18px;font-family:'Liberation Sans', sans-serif;font-size:23px;color:#2e2e2e;letter-spacing:0px;white-space:pre;line-height:normal;-webkit-text-stroke:0.4px #2e2e2e">Output</div>
<svg style="position:absolute;left:2007px;top:1098px" width="20" height="20" viewBox="0 0 20 20" fill="none" stroke="#555" stroke-width="1.7" stroke-linecap="round" stroke-linejoin="round" ><path d="M4 7l6 6 6-6"/></svg>
<div style="position:absolute;left:609px;top:1151.82px;font-family:'Liberation Sans', sans-serif;font-size:22.3px;color:#6b6b6b;letter-spacing:0px;white-space:pre;line-height:normal;">YAML</div>
<svg style="position:absolute;left:677px;top:1156px" width="18" height="18" viewBox="0 0 18 18" fill="none" stroke="#777" stroke-width="1.5" stroke-linecap="round" stroke-linejoin="round" ><path d="M3.5 6.5l5.5 5.5 5.5-5.5"/></svg>
<div style="position:absolute;left:626.4px;top:1208.43px;font-family:'Liberation Mono', monospace;font-size:22.67px;color:#a8a8a8;white-space:pre;line-height:normal">1</div>
<div style="position:absolute;left:684.5px;top:1208.43px;font-family:'Liberation Mono', monospace;font-size:22.67px;color:#262626;white-space:pre;line-height:normal"><span class="k">name</span>: BraintrustRAG</div>
<div style="position:absolute;left:626.4px;top:1239.23px;font-family:'Liberation Mono', monospace;font-size:22.67px;color:#a8a8a8;white-space:pre;line-height:normal">2</div>
<div style="position:absolute;left:684.5px;top:1239.23px;font-family:'Liberation Mono', monospace;font-size:22.67px;color:#262626;white-space:pre;line-height:normal"><span class="k">score</span>: 0</div>
<div style="position:absolute;left:626.4px;top:1270.03px;font-family:'Liberation Mono', monospace;font-size:22.67px;color:#a8a8a8;white-space:pre;line-height:normal">3</div>
<div style="position:absolute;left:684.5px;top:1270.03px;font-family:'Liberation Mono', monospace;font-size:22.67px;color:#262626;white-space:pre;line-height:normal"><span class="k">metadata</span>:</div>
<div style="position:absolute;left:626.4px;top:1300.83px;font-family:'Liberation Mono', monospace;font-size:22.67px;color:#a8a8a8;white-space:pre;line-height:normal">4</div>
<div style="position:absolute;left:711.7px;top:1300.83px;font-family:'Liberation Mono', monospace;font-size:22.67px;color:#262626;white-space:pre;line-height:normal"><span class="k">choice</span>: c</div>
<div style="position:absolute;left:626.4px;top:1331.63px;font-family:'Liberation Mono', monospace;font-size:22.67px;color:#a8a8a8;white-space:pre;line-height:normal">5</div>
<div style="position:absolute;left:711.7px;top:1331.63px;font-family:'Liberation Mono', monospace;font-size:22.67px;color:#262626;white-space:pre;line-height:normal"><span class="k">rationale</span>: The answer does not clearly explain how functions work in a programming context.</div>
<svg style="position:absolute;left:648px;top:1278.3999999999999px" width="12" height="9" viewBox="0 0 12 9" fill="none" stroke="#a0a0a0" stroke-width="1.3" stroke-linecap="round" stroke-linejoin="round" ><path d="M1.8 1.5l4.2 5.2 4.2-5.2"/></svg>
<div style="position:absolute;left:711.7px;top:1362.43px;font-family:'Liberation Mono', monospace;font-size:22.67px;color:#262626;white-space:pre;line-height:normal">Instead, it discusses various unrelated concepts like scoring functions, running prompts as</div>
<div style="position:absolute;left:711.7px;top:1393.23px;font-family:'Liberation Mono', monospace;font-size:22.67px;color:#262626;white-space:pre;line-height:normal">functions, and function calling in AI models, without a coherent focus on the fundamentals of</div>
<div style="position:absolute;left:711.7px;top:1424.03px;font-family:'Liberation Mono', monospace;font-size:22.67px;color:#262626;white-space:pre;line-height:normal">functions in programming. Therefore, it does not adequately answer the question asked.</div>
<div style="position:absolute;left:686.7px;top:1296.8px;width:1.6px;height:154.1px;background:#e6e6e6"></div>
<div style="position:absolute;left:1978px;top:1334px;width:48px;height:48px;border:1.5px solid #e6e6e6;border-radius:9px;background:#fff"></div>
<svg style="position:absolute;left:1994px;top:1349px" width="18" height="18" viewBox="0 0 18 18" fill="none" stroke="#333" stroke-width="1.8" stroke-linecap="round" stroke-linejoin="round" ><path d="M2.5 8.5L9 2l6.5 6.5"/><path d="M9 2v14"/></svg>
<div style="position:absolute;left:1978px;top:1393px;width:48px;height:48px;border:1.5px solid #e6e6e6;border-radius:9px;background:#fff"></div>
<svg style="position:absolute;left:1994px;top:1409px" width="18" height="18" viewBox="0 0 18 18" fill="none" stroke="#333" stroke-width="1.8" stroke-linecap="round" stroke-linejoin="round" ><path d="M2 3.5h14"/><path d="M2 9h14"/><path d="M2 14.5h14"/></svg>
</body></html>
